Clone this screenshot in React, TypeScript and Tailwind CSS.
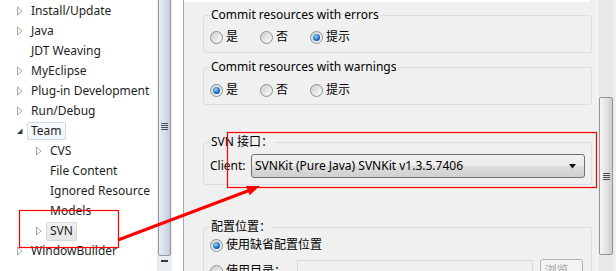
import React from "react";

const FONT = { fontFamily: '"Segoe UI", "Noto Sans", "Noto Sans CJK SC", sans-serif' };

type Node = { label: string; level: 1 | 2; tri: "c" | "e" | "n"; sel?: "team" | "svn" };

const tree: Node[] = [
  { label: "Install/Update", level: 1, tri: "c" },
  { label: "Java", level: 1, tri: "c" },
  { label: "JDT Weaving", level: 1, tri: "n" },
  { label: "MyEclipse", level: 1, tri: "c" },
  { label: "Plug-in Development", level: 1, tri: "c" },
  { label: "Run/Debug", level: 1, tri: "c" },
  { label: "Team", level: 1, tri: "e", sel: "team" },
  { label: "CVS", level: 2, tri: "c" },
  { label: "File Content", level: 2, tri: "n" },
  { label: "Ignored Resource", level: 2, tri: "n" },
  { label: "Models", level: 2, tri: "n" },
  { label: "SVN", level: 2, tri: "c", sel: "svn" },
  { label: "WindowBuilder", level: 1, tri: "c" },
];

function Tri({ kind }: { kind: "c" | "e" | "n" }) {
  return (
    <span className="w-[8px] h-[20px] flex items-center justify-center shrink-0">
      {kind === "c" && (
        <svg width="8" height="10" viewBox="0 0 8 10">
          <path d="M1.5 1 L6 5 L1.5 9 Z" fill="#fff" stroke="#a6a6a6" strokeWidth="1" strokeLinejoin="round" />
        </svg>
      )}
      {kind === "e" && (
        <svg width="8" height="10" viewBox="0 0 8 10">
          <path d="M6.5 2.5 L6.5 8 L1 8 Z" fill="#3c3c3c" />
        </svg>
      )}
    </span>
  );
}

function Radio({ on, label }: { on?: boolean; label: string }) {
  return (
    <div className="flex items-center h-[16px]">
      <span className="w-[13px] h-[13px] rounded-full border border-[#8e8f8f] bg-[linear-gradient(135deg,#d6d6d6,#f4f4f4)] flex items-center justify-center shrink-0">
        {on ? (
          <span className="w-[7px] h-[7px] rounded-full bg-[radial-gradient(circle_at_40%_35%,#8fd3ff,#1a69b8_60%,#0c3f7a)]" />
        ) : (
          <span className="w-[9px] h-[9px] rounded-full bg-[linear-gradient(135deg,#cfcfcf,#fbfbfb)]" />
        )}
      </span>
      <span className="ml-[3px] text-[12px] leading-[16px] text-black">{label}</span>
    </div>
  );
}

function Group({ title, className, children }: { title: string; className?: string; children: React.ReactNode }) {
  return (
    <div className={"relative border border-[#d5dfe5] rounded-[3px] " + (className ?? "")}>
      <span className="absolute left-[6px] top-[-9px] px-[1px] bg-[#f0f0f0] text-[12px] leading-[16px] text-black whitespace-nowrap">
        {title}
      </span>
      {children}
    </div>
  );
}

export default function App() {
  return (
    <div className="relative w-[616px] h-[271px] overflow-hidden flex bg-white" style={FONT}>
      {/* tree */}
      <div className="w-[157px] h-full bg-white overflow-hidden shrink-0 pt-[1px]">
        {tree.map((n) => (
          <div
            key={n.label}
            className={"flex items-center h-[20px] whitespace-nowrap " + (n.level === 1 ? "pl-[16px]" : "pl-[35px]")}
          >
            <Tri kind={n.tri} />
            <span
              className={
                "ml-[3px] px-[3px] border rounded-[2px] text-[12px] text-[#1e1e1e] flex items-center " +
                (n.sel === "team"
                  ? "h-[18px] border-[#c9dcef] bg-[linear-gradient(#fbfdff,#eef4fb)]"
                  : n.sel === "svn"
                  ? "h-[19px] border-[#d9d9d9] bg-[linear-gradient(#f2f2f2,#e5e5e5)]"
                  : "h-[18px] border-transparent")
              }
            >
              {n.label}
            </span>
          </div>
        ))}
      </div>

      {/* left scrollbar */}
      <div className="w-[15px] h-full shrink-0 bg-[#e9edf1] flex flex-col">
        <div className="h-[260px] mt-[-4px] mx-[1px] rounded-[2px] border border-[#8f9aa6] bg-[linear-gradient(90deg,#e7ecf1,#d3dbe3_60%,#c2ccd6)] flex items-center justify-center">
          <div className="flex flex-col gap-[1px]">
            <span className="block w-[7px] h-[1px] bg-[#4a525a]" />
            <span className="block w-[7px] h-[1px] bg-[#4a525a]" />
            <span className="block w-[7px] h-[1px] bg-[#4a525a]" />
            <span className="block w-[7px] h-[1px] bg-[#4a525a]" />
          </div>
        </div>
        <div className="flex-1 flex items-start justify-center pt-[4px]">
          <span className="block w-[7px] h-[2px] bg-[#3a3a3a]" />
        </div>
      </div>

      <div className="w-[11px] h-full bg-white shrink-0" />
      <div className="w-[1px] h-full bg-[#a7a7a7] shrink-0" />

      {/* right panel */}
      <div className="flex-1 h-full bg-[#f0f0f0] flex">
        <div className="w-[413px] h-full flex flex-col">
          <div className="h-[2px] w-[406px] bg-white shrink-0" />
          <div className="pl-[19px] pr-[5px] flex flex-col shrink-0">
            <Group title="Commit resources with errors" className="mt-[13px] h-[38px] pt-[13px] pl-[6px] shrink-0">
              <div className="flex">
                <div className="w-[50px]"><Radio label="是" /></div>
                <div className="w-[50px]"><Radio label="否" /></div>
                <Radio on label="提示" />
              </div>
            </Group>
            <Group title="Commit resources with warnings" className="mt-[14px] h-[38px] pt-[14px] pl-[6px] shrink-0">
              <div className="flex">
                <div className="w-[50px]"><Radio on label="是" /></div>
                <div className="w-[50px]"><Radio label="否" /></div>
                <Radio label="提示" />
              </div>
            </Group>
            <Group title="SVN 接口：" className="mt-[37px] h-[43px] pt-[11px] pl-[6px] pr-[6px] shrink-0">
              <div className="flex items-center">
                <span className="text-[12px] text-black w-[41px]">Client:</span>
                <div className="flex-1 h-[24px] rounded-[3px] border border-[#707070] bg-[linear-gradient(#f2f2f2,#ebebeb_50%,#dddddd_50%,#cfcfcf)] flex items-center pl-[3px] pr-[7px]">
                  <span className="flex-1 text-[12px] text-black whitespace-nowrap">
                    SVNKit (Pure Java) SVNKit v1.3.5.7406
                  </span>
                  <svg width="8" height="5" viewBox="0 0 8 5">
                    <path d="M0 0 H7 L3.5 4.5 Z" fill="#111" />
                  </svg>
                </div>
              </div>
            </Group>
            <Group title="配置位置：" className="mt-[42px] h-[80px] pt-[9px] pl-[6px] pr-[7px] shrink-0">
              <Radio on label="使用缺省配置位置" />
              <div className="flex items-start mt-[7px]">
                <div className="pt-[3px] w-[87px]"><Radio label="使用目录：" /></div>
                <div className="w-[236px] h-[22px] border border-[#d9d9d9] bg-[#f0f0f0]" />
                <div className="ml-[7px] mt-[-1px] w-[43px] h-[23px] rounded-[3px] border border-[#adb2b5] bg-[#f4f4f4] flex items-center justify-center text-[12px] text-[#a0a0a0]">
                  浏览...
                </div>
              </div>
            </Group>
          </div>
        </div>
        {/* right scrollbar */}
        <div className="w-[17px] h-full bg-[#e8e8e8] border-l border-[#f7f7f7] flex flex-col shrink-0">
          <div className="h-[97px]" />
          <div className="h-[158px] mx-[1px] rounded-[2px] border border-[#969696] bg-[linear-gradient(90deg,#f5f5f5,#e2e2e2_55%,#cdcdcd)] flex items-center justify-center">
            <div className="flex flex-col gap-[1px]">
              <span className="block w-[7px] h-[1px] bg-[#4d4d4d]" />
              <span className="block w-[7px] h-[1px] bg-[#4d4d4d]" />
              <span className="block w-[7px] h-[1px] bg-[#4d4d4d]" />
              <span className="block w-[7px] h-[1px] bg-[#4d4d4d]" />
            </div>
          </div>
        </div>
        <div className="w-[2px] h-full bg-[#f0f0f0] shrink-0" />
      </div>

      {/* annotation overlay */}
      <svg className="absolute left-0 top-0 pointer-events-none" width="616" height="271" viewBox="0 0 616 271">
        <rect x="227.5" y="132.5" width="369" height="55" fill="none" stroke="#ff0000" strokeWidth="1.2" />
        <rect x="19.5" y="210.5" width="99" height="37" fill="none" stroke="#ff0000" strokeWidth="1.2" />
        <line x1="118" y1="240" x2="249" y2="190.5" stroke="#ff0000" strokeWidth="3" />
        <polygon points="260,186 249.6,195.3 246,185.9" fill="#ff0000" />
      </svg>
    </div>
  );
}
